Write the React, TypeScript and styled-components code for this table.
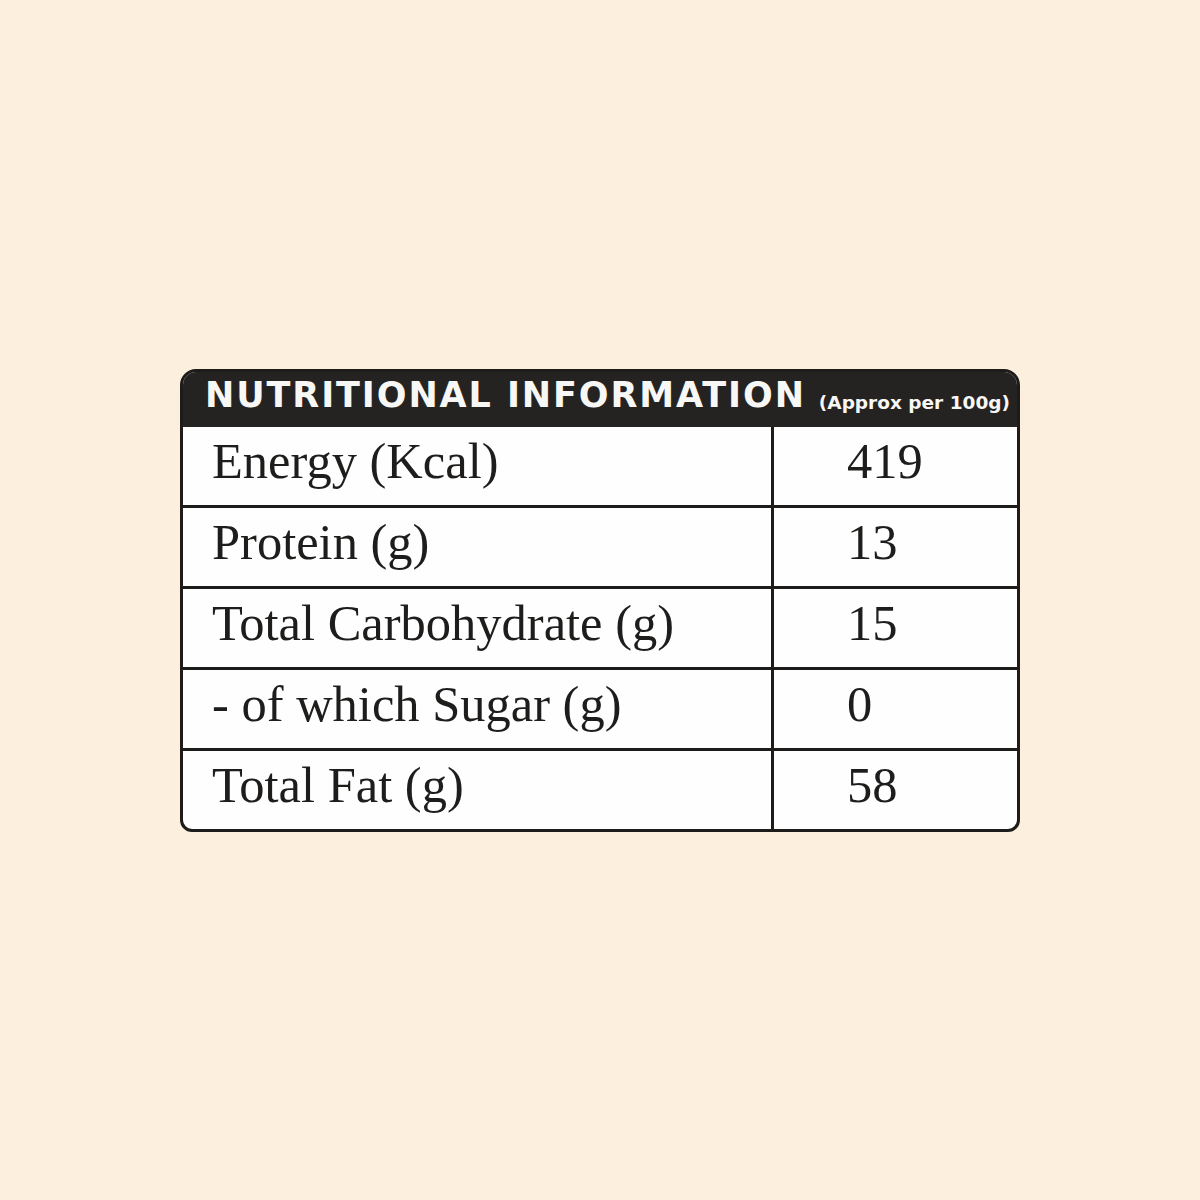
import React from "react";
import styled, { createGlobalStyle } from "styled-components";

type Nutrient = {
    label: string,
    value: string
}

const nutrients: Nutrient[] = [
    { label: "Energy (Kcal)", value: "419" },
    { label: "Protein (g)", value: "13" },
    { label: "Total Carbohydrate (g)", value: "15" },
    { label: "- of which Sugar (g)", value: "0" },
    { label: "Total Fat (g)", value: "58" },
];

const GlobalStyle = createGlobalStyle`
    html, body {
        margin: 0;
        padding: 0;
        background: #fcefdd;
    }
`;

const Page = styled.div`
    min-height: 1200px;
    display: flex;
    align-items: center;
    justify-content: center;
    background: #fcefdd;
`;

const Card = styled.div`
    width: 840px;
    box-sizing: border-box;
    border: 3px solid #1d1c1b;
    border-radius: 16px 16px 12px 12px;
    background: #fefefe;
    overflow: hidden;
`;

const Header = styled.div`
    height: 55px;
    box-sizing: border-box;
    padding: 6px 0 0 22px;
    background: #252321;
    color: #f7f7f5;
    display: flex;
    align-items: baseline;
    gap: 13px;
    font-family: "DejaVu Sans", "Liberation Sans", sans-serif;
    font-weight: bold;
    line-height: 1;
`;

const Title = styled.span`
    font-size: 35px;
    letter-spacing: 1.9px;
`;

const Note = styled.span`
    font-size: 18.5px;
    position: relative;
    top: 2px;
`;

const Row = styled.div`
    display: grid;
    grid-template-columns: 588px 1fr;
    height: 78px;
    & + & {
        border-top: 3px solid #1d1c1b;
    }
`;

const Cell = styled.div<{ $value?: boolean }>`
    display: flex;
    align-items: center;
    box-sizing: border-box;
    padding: 0 0 8px ${props => props.$value ? "73px" : "29px"};
    border-left: ${props => props.$value ? "3px solid #1d1c1b" : "none"};
    font-family: "Liberation Serif", "Times New Roman", serif;
    font-size: 50.5px;
    line-height: 1;
    color: #1e1d1c;
    white-space: nowrap;
`;

export default function App() {
    return (
        <Page>
            <GlobalStyle />
            <Card>
                <Header>
                    <Title>NUTRITIONAL INFORMATION</Title>
                    <Note>(Approx per 100g)</Note>
                </Header>
                {nutrients.map(n =>
                    <Row key={n.label}>
                        <Cell>{n.label}</Cell>
                        <Cell $value>{n.value}</Cell>
                    </Row>
                )}
            </Card>
        </Page>
    );
}
